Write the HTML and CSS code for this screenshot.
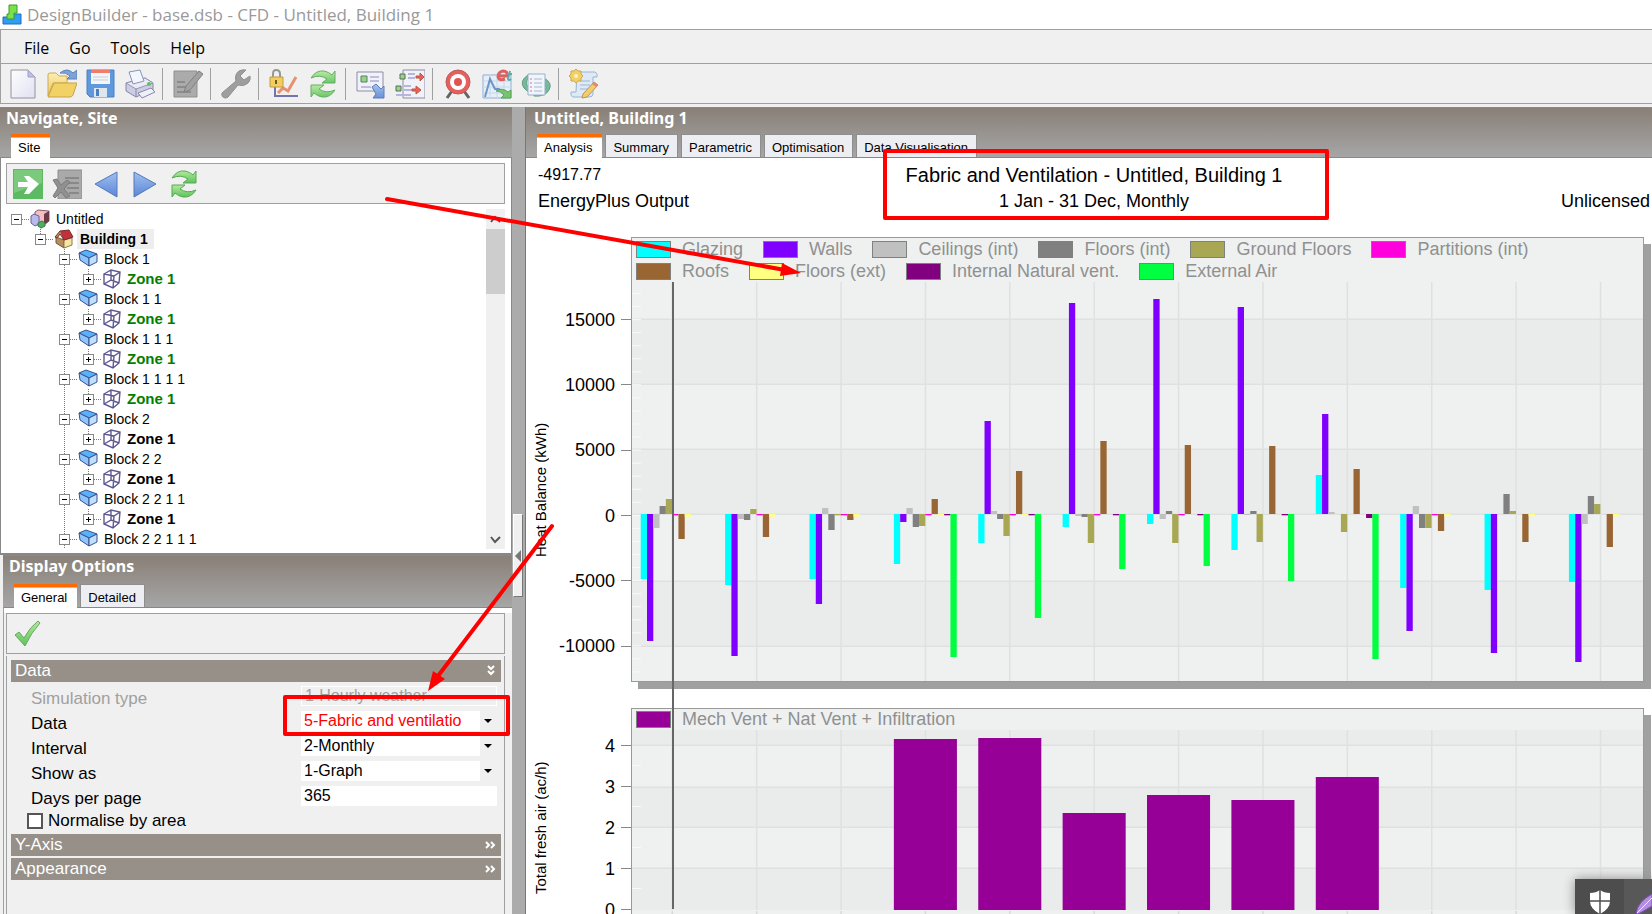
FILE: index.html
```html
<!DOCTYPE html>
<html lang="en">
<head>
<meta charset="utf-8">
<title>DesignBuilder - base.dsb - CFD - Untitled, Building 1</title>
<link rel="stylesheet" href="styles.css">
</head>
<body>
<svg class="defs" aria-hidden="true">
  <defs>
    <linearGradient id="gGreen" x1="0" y1="0" x2="0" y2="1"><stop offset="0" stop-color="#b4ea9c"/><stop offset="1" stop-color="#5cc35a"/></linearGradient>
    <linearGradient id="gBlue" x1="0" y1="0" x2="0" y2="1"><stop offset="0" stop-color="#9fc0f0"/><stop offset="1" stop-color="#5b86d6"/></linearGradient>
    <linearGradient id="gYel" x1="0" y1="0" x2="0" y2="1"><stop offset="0" stop-color="#fdeeb0"/><stop offset="1" stop-color="#f0c445"/></linearGradient>
    <linearGradient id="gPage" x1="0" y1="0" x2="1" y2="1"><stop offset="0" stop-color="#fff"/><stop offset="1" stop-color="#dfe0f4"/></linearGradient>
    <symbol id="refresh" viewBox="0 0 30 30">
      <path d="M3 9Q8 1 16 2Q21 3 24 6L27 2V14H14L19 10Q12 5 3 9Z" fill="url(#gGreen)" stroke="#57a957"/>
      <path d="M27 21Q22 29 14 28Q9 27 6 24L3 28V16H16L11 20Q18 25 27 21Z" fill="url(#gGreen)" stroke="#57a957"/>
    </symbol>
    <symbol id="site" viewBox="0 0 20 20">
      <path d="M5 3L8 1L19 2V12L14 16L5 12Z" fill="#f3bfc2" stroke="#8a5a66"/><path d="M14 5L19 2V12L14 16Z" fill="#6f3a48"/>
      <path d="M1 7L4 5L9 7V15L5 17L1 14Z" fill="#b9b9ee" stroke="#62629a"/><path d="M8 14L12 12L15 14V17L11 19L8 17Z" fill="#4fae64" stroke="#347a46"/>
    </symbol>
    <symbol id="house" viewBox="0 0 20 20">
      <path d="M2 8L10 11V19L2 14Z" fill="#b98e5c" stroke="#6f5a3c"/><path d="M10 11L18 9V16L10 19Z" fill="#f6e6a2" stroke="#8a7a4c"/>
      <path d="M6 2L15 1L19 8L10 11Z" fill="#c0323a" stroke="#7f2930"/><path d="M6 2L1 8L3 9L6 5L10 11" fill="#b98e5c" stroke="#7f2930"/>
    </symbol>
    <symbol id="block" viewBox="0 0 20 20">
      <path d="M1 4L8 1L19 5L11 9Z" fill="#56b2fa" stroke="#3c4f8c"/><path d="M1 4L11 9V17L2 11Z" fill="#8cc6fb" stroke="#3c4f8c"/><path d="M11 9L19 5V13L11 17Z" fill="#bfe0fd" stroke="#3c4f8c"/>
    </symbol>
    <symbol id="zone" viewBox="0 0 20 20">
      <path d="M2 5L9 1L18 3L17 14L11 19L2 15ZM2 5L12 7L18 3M12 7L11 19M9 1L9 11L2 15M9 11L17 14" fill="none" stroke="#5c5890" stroke-width="1.4"/>
    </symbol>
  </defs>
</svg>

<header class="titlebar">
  <svg width="20" height="22" viewBox="0 0 20 22"><path d="M1 13H7V10H19V20H1Z" fill="#2f9df4" stroke="#1a6fc4"/><path d="M7 1H15V9H12V15H5V10H7Z" fill="#7be04c" stroke="#3c9a2c"/></svg>
  <h1>DesignBuilder - base.dsb - CFD - Untitled, Building 1</h1>
</header>

<nav class="menubar">
  <button>File</button><button>Go</button><button>Tools</button><button>Help</button>
</nav>

<div class="toolbar">
  <button aria-label="New"><svg viewBox="0 0 30 30"><path d="M3 1H20L27 8V29H3Z" fill="url(#gPage)" stroke="#8a8a96"/><path d="M20 1L27 8H20Z" fill="#b8b8e8" stroke="#9a9ab8"/></svg></button>
  <button aria-label="Open"><svg viewBox="0 0 30 30"><path d="M1 6Q1 4 3 4H9L12 7H20V14H6L1 27Z" fill="url(#gYel)" stroke="#c9a445"/><path d="M7 14H30L26 26Q25 28 23 28H1Z" fill="#f3cf55" stroke="#c09c3c"/><path d="M13 4Q20 -2 26 4L30 1V10H20L23 7Q19 3 13 4Z" fill="#6f9bd8" stroke="#4e75ae"/></svg></button>
  <button aria-label="Save"><svg viewBox="0 0 30 30"><path d="M1 1H28V28H4L1 25Z" fill="#4f8fdc" stroke="#3c74bd"/><path d="M5 1H24V15H5Z" fill="#f4f6fa"/><path d="M5 1H24V4H5Z" fill="#f0705c"/><path d="M7 8H22M7 11H22" stroke="#c4ccd8"/><path d="M8 19H21V28H8Z" fill="#dfe6ee"/><path d="M10 20H13V27H10Z" fill="#3c74bd"/></svg></button>
  <button aria-label="Print"><svg viewBox="0 0 30 30"><path d="M1 14L20 9L28 14V21L11 28L1 22Z" fill="#c9cae2" stroke="#7c7ca4"/><path d="M1 14L20 9L28 14L11 20Z" fill="#ebebf6" stroke="#8b8bb0"/><path d="M4 3L15 1L19 12L8 15Z" fill="#f4f8ff" stroke="#7d8bb4"/><path d="M11 20V28" stroke="#7c7ca4"/><path d="M13 24L26 19L30 23L17 29Z" fill="#eef0fb" stroke="#7c7ca4"/><circle cx="24" cy="15" r="2" fill="#4cc04c"/></svg></button>
  <span class="sep"></span>
  <button aria-label="Edit"><svg viewBox="0 0 30 30"><path d="M1 2H24V28H1Z" fill="#a4a4a4" stroke="#868686"/><path d="M4 13H12M4 18H18M4 23H18" stroke="#777" stroke-width="1.5"/><path d="M26 2L30 5L17 21L11 23L13 17Z" fill="#999" stroke="#757575"/></svg></button>
  <span class="sep"></span>
  <button aria-label="Settings"><svg viewBox="0 0 30 30"><path d="M25 1Q17 0 15 6Q14 9 15 12L1 24Q0 28 4 29Q6 29 7 28L17 16Q23 18 27 14Q30 11 29 7L23 11L19 7Z" fill="#969696" stroke="#858585"/></svg></button>
  <span class="sep"></span>
  <button aria-label="Results lock"><svg viewBox="0 0 30 30"><path d="M6 14V27H29" fill="none" stroke="#6468a4" stroke-width="2"/><path d="M9 24L14 19L19 22L27 8" fill="none" stroke="#e58863" stroke-width="3"/><path d="M4 9V5Q4 1 7 1Q11 1 11 5V9" fill="none" stroke="#8d8d8d" stroke-width="2"/><path d="M1 8H14V18H1Z" fill="#f5cb4a" stroke="#b8923c"/><path d="M7 11V15" stroke="#5c4a20" stroke-width="2"/></svg></button>
  <button aria-label="Refresh"><svg viewBox="0 0 30 30"><use href="#refresh"/></svg></button>
  <span class="sep"></span>
  <button aria-label="Export view"><svg viewBox="0 0 30 30"><path d="M1 3H27V22H1Z" fill="#f1f2fa" stroke="#83839e"/><path d="M5 7H11V13H5Z" fill="#8cd66a" stroke="#4c6c6c"/><path d="M14 8H23M14 12H23M5 18H15" stroke="#b8b8dc" stroke-width="2"/><path d="M16 18L20 15L25 20L28 17V29H17L20 25Z" fill="url(#gBlue)" stroke="#4a72b4"/></svg></button>
  <button aria-label="Compare"><svg viewBox="0 0 30 30"><path d="M8 1H30V29H8Z" fill="#f1f2fa" stroke="#83839e"/><path d="M5 5H10V10H5ZM1 17H6V22H1Z" fill="#8cd66a" stroke="#4c5c5c"/><path d="M13 5H20M13 9H20M9 17H16M9 21H18M1 26H16" stroke="#b0b0dc" stroke-width="2"/><path d="M21 7H25V4L29 8L25 12V9H21ZM17 20H21V17L26 21L21 25V22H17Z" fill="#e85440" stroke="#b84434"/></svg></button>
  <span class="sep"></span>
  <button aria-label="Target"><svg viewBox="0 0 30 30"><path d="M9 22L4 29M21 22L26 29" stroke="#555" stroke-width="3"/><circle cx="15" cy="13" r="12" fill="#e4504e" stroke="#b84c4c"/><circle cx="15" cy="13" r="8" fill="#fff"/><circle cx="15" cy="13" r="4" fill="#e04444"/></svg></button>
  <button aria-label="EnergyPlus results"><svg viewBox="0 0 30 30"><path d="M1 6H29V29H1Z" fill="#e6eff9" stroke="#85a9d4"/><path d="M1 12H29M1 18H29M1 24H29M8 6V29M15 6V29M22 6V29" stroke="#c2d6ec"/><path d="M3 28L8 10L13 20H17L24 27" fill="none" stroke="#5f8cc6" stroke-width="2"/><path d="M17 7H25Q26 2 21 2Q16 3 16 8Q17 12 23 10" fill="none" stroke="#d9534f" stroke-width="3"/><path d="M28 2L26 10Q27 12 29 10M25 5H30" fill="none" stroke="#5aa0a0" stroke-width="2"/><path d="M14 22Q20 18 26 23L29 21V29H19L22 26Q19 22 14 22Z" fill="#6cbf60" stroke="#4d9c4d"/></svg></button>
  <button aria-label="Report"><svg viewBox="0 0 30 30"><path d="M7 6Q-2 12 3 19Q6 23 10 23L8 19Q3 14 7 10ZM23 9Q32 14 28 21Q24 28 13 27V23Q22 24 25 19Z" fill="#6cb394" stroke="#4f9478"/><path d="M7 5H24V26H7Z" fill="#f2f6fc" stroke="#8eaac8"/><path d="M13 10H21M13 14H21M13 18H21M13 22H21" stroke="#9ab4d4"/><path d="M9 10H11M9 14H11M9 18H11M9 22H11" stroke="#d46a6a"/></svg></button>
  <span class="sep"></span>
  <button aria-label="Script"><svg viewBox="0 0 30 30"><path d="M8 3H26Q29 4 28 8H24V25Q24 28 20 28H4Q1 27 2 23H7Z" fill="#dce9f6" stroke="#8fb0d2"/><path d="M11 12H21M11 16H21M11 20H19" stroke="#8fb0d2"/><path d="M7 0L9 2L12 2L12 5L14 7L12 9L12 12L9 12L7 14L5 12L2 12L2 9L0 7L2 5L2 2L5 2Z" fill="#f4cd56" stroke="#c9a03c"/><circle cx="7" cy="7" r="2" fill="#fff3c0"/><path d="M25 13L29 16L18 28L13 29L14 25Z" fill="#f5c95c" stroke="#b38d4a"/><path d="M25 13L29 16L27 18L23 15Z" fill="#e27c74"/></svg></button>
</div>

<main class="workspace">
  <aside class="side">
    <section class="nav-panel">
      <div class="band">
        <h2>Navigate, Site</h2>
        <div class="tabs"><button class="tab active">Site</button></div>
      </div>
      <div class="nav-body">
        <div class="tools">
          <button aria-label="Go"><svg viewBox="0 0 30 30"><path d="M0 0H30V30H0Z" fill="#5cbb62"/><path d="M1 1H29V14L1 24Z" fill="#8fd28f" opacity=".6"/><path d="M5 13H15L11 7H16L26 15L16 25H11L15 18H5Z" fill="#fff"/></svg></button>
          <button aria-label="Delete"><svg viewBox="0 0 30 30"><path d="M6 1H30V30H6Z" fill="#a9a9a9" stroke="#8e8e8e"/><path d="M13 9H27M15 14H27M15 19H27M17 24H27" stroke="#7d7d7d" stroke-width="1.5"/><path d="M1 11L5 10L9 16L15 11L18 13L12 20L18 27L14 29L9 23L3 29L1 27L6 19Z" fill="#909090" stroke="#7c7c7c"/></svg></button>
          <button aria-label="Back"><svg viewBox="0 0 30 30"><path d="M26 3V28L4 15Z" fill="url(#gBlue)" stroke="#5478be"/></svg></button>
          <button aria-label="Forward"><svg viewBox="0 0 30 30"><path d="M4 3V28L26 15Z" fill="url(#gBlue)" stroke="#5478be"/></svg></button>
          <button aria-label="Reload"><svg viewBox="0 0 30 30"><use href="#refresh"/></svg></button>
        </div>
        <div class="tree-area">
          <ul class="tree" id="tree"></ul>
          <div class="scrollbar">
            <svg viewBox="0 0 19 20"><path d="M5 13L9 8L14 13" fill="none" stroke="#555" stroke-width="2"/></svg>
            <div class="thumb"></div>
            <svg viewBox="0 0 19 20"><path d="M5 8L9 13L14 8" fill="none" stroke="#555" stroke-width="2"/></svg>
          </div>
        </div>
      </div>
    </section>

    <section class="opt-panel">
      <div class="band">
        <h2>Display Options</h2>
        <div class="tabs"><button class="tab active">General</button><button class="tab">Detailed</button></div>
      </div>
      <div class="opt-body">
        <div class="tools">
          <button aria-label="Apply"><svg viewBox="0 0 30 30"><path d="M2 16L6 13L11 19Q17 8 25 2L27 4Q18 14 12 27Z" fill="url(#gGreen)" stroke="#6aa564"/></svg></button>
        </div>
        <form class="form">
          <button type="button" class="group">Data<svg viewBox="0 0 12 12"><path d="M3 1L6 4L9 1M3 6L6 9L9 6" fill="none" stroke="#fff" stroke-width="2"/></svg></button>
          <div class="fields">
            <div class="row off"><label for="sim">Simulation type</label><span class="pick"><select id="sim" disabled><option>1-Hourly weather</option></select></span></div>
            <div class="row"><label for="data">Data</label><span class="pick hot"><select id="data"><option>5-Fabric and ventilatio</option></select></span></div>
            <div class="row"><label for="interval">Interval</label><span class="pick"><select id="interval"><option>2-Monthly</option></select></span></div>
            <div class="row"><label for="show">Show as</label><span class="pick"><select id="show"><option>1-Graph</option></select></span></div>
            <div class="row"><label for="days">Days per page</label><input id="days" type="text" value="365"></div>
            <div class="check"><input id="norm" type="checkbox"><label for="norm">Normalise by area</label></div>
          </div>
          <button type="button" class="group">Y-Axis<svg viewBox="0 0 12 12"><path d="M1 3L4 6L1 9M6 3L9 6L6 9" fill="none" stroke="#fff" stroke-width="2"/></svg></button>
          <button type="button" class="group">Appearance<svg viewBox="0 0 12 12"><path d="M1 3L4 6L1 9M6 3L9 6L6 9" fill="none" stroke="#fff" stroke-width="2"/></svg></button>
        </form>
      </div>
    </section>
  </aside>

  <div class="splitter"><button aria-label="Collapse sidebar"><svg width="8" height="12" viewBox="0 0 8 12"><path d="M7 0V12L1 6Z" fill="#777"/></svg></button></div>

  <section class="view">
    <div class="band">
      <h2>Untitled, Building 1</h2>
      <div class="tabs"><button class="tab active">Analysis</button><button class="tab">Summary</button><button class="tab">Parametric</button><button class="tab">Optimisation</button><button class="tab">Data Visualisation</button></div>
    </div>
    <div class="view-body">
      <div class="heading">
        <span class="value">-4917.77</span><h3>Fabric and Ventilation - Untitled, Building 1</h3><span></span>
        <span>EnergyPlus Output</span><span class="period">1 Jan - 31 Dec, Monthly</span><span class="licence">Unlicensed</span>
      </div>
      <div class="chart">
        <div class="axis-title axis-heat">Heat Balance (kWh)</div>
        <ol class="ticks ticks-heat"><li>15000</li><li>10000</li><li>5000</li><li>0</li><li>-5000</li><li>-10000</li></ol>
        <div class="plot plot-heat">
          <ul class="legend" id="legend"></ul>
          <svg id="heat" viewBox="0 0 1010 399" preserveAspectRatio="none"></svg>
          <div class="cursor"></div>
        </div>
      </div>
      <div class="chart">
        <div class="axis-title axis-air">Total fresh air (ac/h)</div>
        <ol class="ticks ticks-air"><li>4</li><li>3</li><li>2</li><li>1</li><li>0</li></ol>
        <div class="plot plot-air">
          <ul class="legend"><li><i style="background:#960096"></i>Mech Vent + Nat Vent + Infiltration</li></ul>
          <svg id="air" viewBox="0 0 1010 180" preserveAspectRatio="none"></svg>
        </div>
      </div>
    </div>
  </section>
</main>

<div class="tray">
  <svg width="22" height="24" viewBox="0 0 22 24"><path d="M11 0Q15 3 21 3V11Q21 19 11 24Q1 19 1 11V3Q7 3 11 0Z" fill="#fff"/><path d="M11 0V24M0 11H22" stroke="#4d4d4d" stroke-width="1.5"/></svg>
  <span><svg width="16" height="20" viewBox="0 0 16 20"><path d="M0 20Q1 8 16 0V12L6 18L2 20Z" fill="#b48ee0" stroke="#7c4cb8"/><path d="M1 19L16 4" stroke="#eee"/></svg></span>
</div>

<svg class="markup" width="1652" height="914" aria-hidden="true">
  <g fill="none" stroke="#f00" stroke-width="4" stroke-linecap="round" stroke-linejoin="round">
    <path d="M387 199L785 270M552 526L438 676"/>
    <path d="M885 151H1327V218H885ZM285 697H508V734H285Z"/>
  </g>
  <path d="M801 273L780 276L782 263ZM428 691L433 671L445 679Z" fill="#f00"/>
</svg>
<script src="app.js"></script>
</body>
</html>
```
FILE: app.js
```js
// Project tree
const block = (name, cls) => ({ name, icon: 'block', open: true, kids: [{ name: 'Zone 1', icon: 'zone', cls }] });
const model = {
  name: 'Untitled', icon: 'site', open: true, kids: [{
    name: 'Building 1', icon: 'house', cls: 'current', open: true, kids: [
      block('Block 1', 'done'), block('Block 1 1', 'done'), block('Block 1 1 1', 'done'), block('Block 1 1 1 1', 'done'),
      block('Block 2', 'todo'), block('Block 2 2', 'todo'), block('Block 2 2 1 1', 'todo'),
      { name: 'Block 2 2 1 1 1', icon: 'block', open: true }
    ]
  }]
};
function node(n) {
  const mark = n.open ? 'M3 5.5H8' : 'M3 5.5H8M5.5 3V8';
  const kids = n.kids ? `<ul class="${n.kids.length > 1 ? 'long' : ''}">${n.kids.map(node).join('')}</ul>` : '';
  return `<li><div class="item"><button class="toggle" aria-label="Toggle"><svg width="11" height="11"><path d="${mark}" stroke="#000"/></svg></button>` +
    `<i class="link"></i><svg class="pic"><use href="#${n.icon}"/></svg><span class="name ${n.cls || ''}">${n.name}</span></div>${kids}</li>`;
}
document.getElementById('tree').innerHTML = node(model);

// Series of the heat balance chart
const series = [
  ['Glazing', '#00ffff'], ['Walls', '#8000ff'], ['Ceilings (int)', '#c0c0c0'], ['Floors (int)', '#808080'],
  ['Ground Floors', '#a8a854'], ['Partitions (int)', '#ff00dc'], ['Roofs', '#996633'], ['Floors (ext)', '#ffff80'],
  ['Internal Natural vent.', '#800080'], ['External Air', '#00ff40']
];
document.getElementById('legend').innerHTML =
  series.map(([name, color]) => `<li><i style="background:${color}"></i>${name}</li>`).join('');

// Monthly values, 1 unit = 76.6 kWh
const months = [
  [-65, -127, -14, 8, 15, -1.3, -25, -2.7, 0, 0],
  [-71, -142, -5, -6, 5, -1.3, -23, -2.7, 0, 0],
  [-65, -90, 6, -16, -1.3, -1.3, -6, -2.7, 0, 0],
  [-50, -8, 6, -13, -12, -1.3, 15, -1.3, -1.3, -143],
  [-29, 93, 3, -5, -22, -1.3, 43, -1.3, -1.3, -104],
  [-13, 211, -2, -3, -29, -1.3, 73, 0, -1.3, -55],
  [-10, 215, -5, 3, -29, -1.3, 69, 0, -1.3, -52],
  [-36, 207, -1, 3, -28, 0, 68, 0, -1.3, -67],
  [39, 100, 2, 0, -18, 0, 45, 0, -4, -145],
  [-74, -117, 8, -14, -14, -1.3, -17, -2.3, 0, 0],
  [-76, -139, 0, 20, 3, 0, -28, -2.3, 0, 0],
  [-68, -148, -10, 18, 10, 0, -33, -2.3, 0, 0]
];
const STEP = 84.3, FIRST = 40;
const rect = (x, y, w, h, fill) => `<rect x="${x}" y="${y}" width="${w}" height="${h}" fill="${fill}"/>`;

function backdrop(height, levels, darkFirst, minor, tail) {
  let out = '';
  const edges = [0, ...levels, height];
  for (let i = 0; i < edges.length - 1; i++) {
    out += rect(0, edges[i], 1010, edges[i + 1] - edges[i], (i % 2 === 0) === darkFirst ? '#eaeceb' : '#eef1f0');
  }
  for (const y of levels) out += rect(0, y - 0.5, 1010, 1.5, '#dfe1e0');
  for (let i = 0; i < 12; i++) out += rect(FIRST + STEP * i - 0.5, 0, 1.5, height, '#dfe1e0');
  for (let y = minor.from; y < height; y += minor.step) out += rect(0, y, 9, 1, '#f8faf9');
  if (tail) for (let i = 0; i < 12; i++) out += rect(FIRST + STEP * i - 0.5, height + 1, 1.5, 6, '#d8d8d8');
  return out;
}

let heat = backdrop(399, [37, 102, 167, 232, 299, 364], false, { from: 11, step: 13.05 });
months.forEach((values, m) => values.forEach((v, s) => {
  if (v) heat += rect(FIRST + STEP * m - 31.3 + 6.28 * s, v > 0 ? 232 - v : 232, 6.3, Math.abs(v), series[s][1]);
}));
document.getElementById('heat').innerHTML = heat;

let air = backdrop(180, [15, 57, 97, 138], true, { from: 35, step: 41 }, true);
[0, 0, 0, 171, 172, 97, 115, 110, 133].forEach((v, m) => {
  if (v) air += rect(FIRST + STEP * m - 31.3, 180 - v, 63, v, '#960096');
});
document.getElementById('air').innerHTML = air;
```
FILE: styles.css
```css
* { box-sizing: border-box; }
body { margin: 0; height: 100vh; display: flex; flex-direction: column; overflow: hidden; position: relative; background: #f0f0f0; color: #000; font-family: "Liberation Sans", Arial, sans-serif; font-size: 17px; }
button { font: inherit; color: inherit; border: 0; background: none; padding: 0; }
h1, h2, h3, ul, ol { margin: 0; padding: 0; font-weight: normal; list-style: none; }
.defs { position: absolute; width: 0; height: 0; }

.titlebar { height: 29px; flex: none; display: flex; align-items: center; gap: 5px; padding-left: 2px; background: #fff; color: #999; font-family: "Open Sans", sans-serif; }
.titlebar h1 { font-size: 17px; line-height: 28px; }
.menubar { height: 34px; flex: none; display: flex; gap: 20px; padding-left: 23px; border-top: 1px solid #a0a0a0; border-left: 1px solid #a0a0a0; font: 16px/36px "Open Sans", sans-serif; }
.toolbar { height: 41px; flex: none; display: flex; align-items: center; padding-left: 2px; border-top: 1px solid #a0a0a0; border-bottom: 1px solid #a0a0a0; border-left: 1px solid #a0a0a0; }
.toolbar button { width: 39px; display: flex; justify-content: center; }
.toolbar svg { width: 30px; height: 30px; opacity: .9; }
.sep { width: 9px; height: 32px; flex: none; border-left: 1px solid #a0a0a0; margin-left: 3px; margin-right: -3px; }

.workspace { flex: 1; min-height: 0; display: flex; margin-top: 3px; background: #ababab; }
.side { width: 512px; flex: none; display: flex; flex-direction: column; }
.band { height: 50px; flex: none; display: flex; flex-direction: column; justify-content: space-between; background: linear-gradient(#898077, #a6a6a6); border-top: 1px solid #888; }
.band h2 { padding-left: 6px; color: #fff; font: bold 16px/20px "Noto Sans", sans-serif; }
.tabs { display: flex; gap: 3px; padding-left: 11px; height: 23px; }
.tab { padding: 3px 8px 0 7px; background: #edeef3; border: 1px solid #8e8e8e; border-bottom: 0; font-size: 13px; line-height: 18px; }
.tab.active { background: #fff; border: 0; border-top: 3px solid #ff6a00; padding: 1px 10px 0 7px; box-shadow: inset 0 1px #ffb066, 0 1px #fff; position: relative; }

.nav-panel { height: 448px; flex: none; display: flex; flex-direction: column; }
.nav-body { flex: 1; min-height: 0; display: flex; flex-direction: column; padding: 5px 6px 4px 5px; background: #fff; border: 1px solid #888; border-bottom-width: 2px; }
.tools { height: 41px; flex: none; display: flex; align-items: center; gap: 9px; padding-left: 6px; background: #f0f0f0; border: 1px solid #a0a0a0; }
.tools button, .tools svg { width: 30px; height: 30px; display: block; }
.tree-area { flex: 1; min-height: 0; display: flex; margin-top: 5px; }
.tree { flex: 1; overflow: hidden; padding-left: 5px; font-size: 14px; line-height: 20px; }
.tree ul { padding-left: 24px; background: repeating-linear-gradient(#777 0 1px, transparent 1px 2px) 29px 0 / 1px 10px no-repeat; }
.tree ul.long { background-size: 1px 100%; }
.item { height: 20px; display: flex; align-items: center; }
.toggle { width: 11px; height: 11px; flex: none; display: flex; background: #fff; outline: 1px solid #888; outline-offset: -1px; }
.link { width: 8px; height: 1px; background: repeating-linear-gradient(90deg, #777 0 1px, transparent 1px 2px); }
.pic { width: 20px; height: 20px; }
.name { margin-left: 3px; padding: 0 3px; white-space: nowrap; }
.current { background: #eee; font-weight: bold; padding-right: 6px; }
.done, .todo { font-weight: bold; font-size: 15px; margin-left: 2px; }
.done { color: #008000; }
.scrollbar { width: 19px; display: flex; flex-direction: column; background: #f0f0f0; }
.scrollbar svg { width: 19px; height: 20px; }
.thumb { height: 65px; margin-bottom: auto; background: #cdcdcd; }

.opt-panel { flex: 1; min-height: 0; display: flex; flex-direction: column; padding-left: 3px; background: #f0f0f0; }
.opt-panel .band { height: 52px; }
.opt-body { flex: 1; display: flex; flex-direction: column; padding: 5px 7px 0 2px; border-left: 1px solid #a0a0a0; border-top: 1px solid #888; background: linear-gradient(#fff 5px, #f0f0f0 5px); }
.form { flex: 1; display: flex; flex-direction: column; gap: 2px; margin-top: 2px; padding: 4px 3px 0 4px; border: solid #a0a0a0; border-width: 0 1px; }
.group { height: 22px; display: flex; align-items: center; justify-content: space-between; padding: 0 4px; background: #969089; color: #fff; text-align: left; }
.group svg { width: 12px; height: 12px; }
.fields { padding: 2px 4px 1px 20px; }
.row { display: flex; justify-content: space-between; height: 25px; line-height: 25px; }
.off { color: #a0a0a0; }
.pick, .row > input { width: 196px; height: 20px; }
.pick { position: relative; display: flex; background: #fff; }
.off .pick { background: #f0f0f0; border: 1px solid #fff; }
.pick::after { content: ""; position: absolute; right: 5px; top: 8px; border: 4px solid transparent; border-top-color: #000; pointer-events: none; }
.pick select { appearance: none; flex: 1; width: 0; border: 0; padding: 0 0 0 3px; background: linear-gradient(#f0f0f0, #f0f0f0) right / 17px no-repeat; font: 16px/18px "Liberation Sans", Arial, sans-serif; color: inherit; opacity: 1; }
.hot { color: #f00; }
.row > input { border: 0; padding: 0 3px; font: 16px/20px "Liberation Sans", Arial, sans-serif; }
.check { display: flex; align-items: center; gap: 5px; height: 20px; margin-left: -4px; }
.check input { appearance: none; width: 16px; height: 16px; margin: 0; background: #fff; border: 2px solid #555; }

.splitter { width: 14px; flex: none; display: flex; align-items: flex-start; padding: 407px 2px 0 1px; border-right: 1px solid #777; }
.splitter button { width: 11px; height: 83px; display: flex; align-items: center; justify-content: center; background: #f0f0f0; border: 1px solid #fff; border-right-color: #777; border-bottom-color: #777; }

.view { flex: 1; min-width: 0; display: flex; flex-direction: column; }
.view .band h2 { padding-left: 8px; }
.view-body { flex: 1; min-height: 0; overflow: hidden; background: #fff; border-top: 1px solid #888; padding-top: 4px; }
.heading { display: grid; grid-template-columns: 1fr auto 1fr; line-height: 26px; padding: 0 2px 23px 12px; font-size: 18px; }
.heading h3 { font-size: 20px; }
.heading .value { font-size: 16px; }
.period { text-align: center; }
.licence { text-align: right; }
.chart { display: flex; padding: 0 8px 26px 6px; }
.axis-title { writing-mode: vertical-rl; transform: rotate(180deg); width: 18px; line-height: 18px; font-size: 15px; flex: none; white-space: nowrap; }
.axis-heat { padding-bottom: 186px; text-align: right; }
.axis-air { padding-bottom: 53px; text-align: right; }
.ticks { width: 81px; flex: none; display: grid; grid-auto-rows: 1fr; font-size: 18px; line-height: 10px; text-align: right; }
.ticks li { display: flex; align-items: center; justify-content: flex-end; gap: 6px; }
.ticks li::after { content: ""; width: 10px; height: 1px; background: #888; }
.ticks-heat { height: 392px; margin-top: 50px; }
.ticks-air { height: 205px; margin-top: 17px; }
.plot { flex: 1; min-width: 0; position: relative; background: #eef1f0; border: 1px solid #999; box-shadow: 7px 7px #a0a0a0; }
.plot svg { display: block; width: 100%; overflow: visible; }
.plot-heat svg { height: 399px; }
.plot-air svg { height: 180px; }
.legend { display: flex; flex-wrap: wrap; column-gap: 20px; padding: 0 40px 0 4px; color: #909090; font-size: 18px; line-height: 22px; }
.legend li { display: flex; align-items: center; gap: 11px; }
.legend i { width: 35px; height: 17px; border: 1px solid #808080; }
.plot-air .legend { line-height: 21px; }
.cursor { position: absolute; left: 4%; top: 44px; width: 2px; height: 627px; background: #666; z-index: 1; }

.tray { position: absolute; right: 0; bottom: 0; width: 77px; height: 35px; display: flex; align-items: flex-end; padding-left: 14px; gap: 13px; background: #4d4d4d; box-shadow: 0 0 12px #888; overflow: hidden; z-index: 2; }
.tray svg { display: block; flex: none; }
.tray span { flex: 1; height: 35px; display: flex; align-items: flex-end; justify-content: flex-end; background: #585858; }
.markup { position: absolute; left: 0; top: 0; pointer-events: none; z-index: 3; }
```
